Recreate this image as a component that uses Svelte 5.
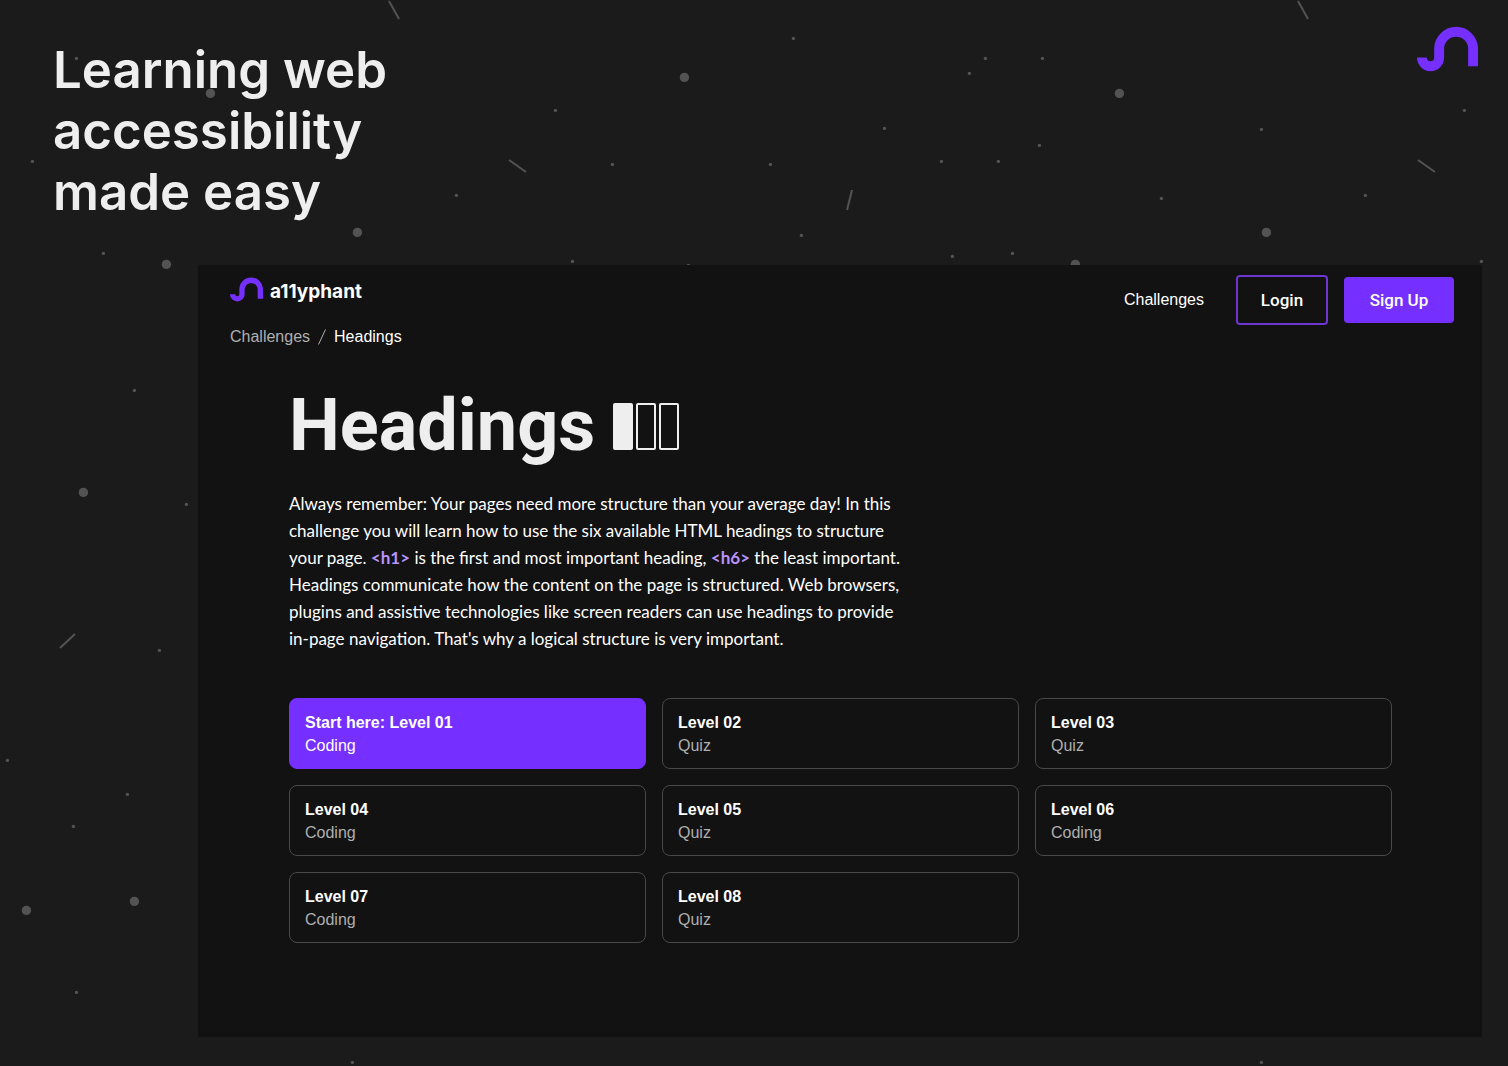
<script>
  const levels = [
    { title: 'Start here: Level 01', kind: 'Coding', active: true },
    { title: 'Level 02', kind: 'Quiz' },
    { title: 'Level 03', kind: 'Quiz' },
    { title: 'Level 04', kind: 'Coding' },
    { title: 'Level 05', kind: 'Quiz' },
    { title: 'Level 06', kind: 'Coding' },
    { title: 'Level 07', kind: 'Coding' },
    { title: 'Level 08', kind: 'Quiz' }
  ];

  // Night sky: planets, stars and falling streaks
  const planets = [
    [684, 77], [210, 93], [1119, 93], [357, 232], [1266, 232],
    [166, 264], [1075, 264], [83, 492], [26, 910], [134, 901]
  ];
  const stars = [
    [76, 58], [32, 161], [103, 253], [134, 390], [186, 504], [159, 650],
    [7, 760], [127, 794], [73, 826], [76, 992], [352, 1062], [1261, 1062],
    [456, 195], [555, 110], [612, 164], [572, 261], [688, 265], [793, 38],
    [770, 164], [801, 235], [884, 128], [941, 161], [969, 73], [985, 58],
    [1042, 58], [998, 161], [1039, 145], [952, 256], [1012, 253],
    [1161, 198], [1261, 129], [1365, 195], [1464, 110], [1481, 261]
  ];
  const streaks = [
    [389, 1, 399, 19], [1298, 1, 1308, 19], [509, 160, 526, 172],
    [1418, 160, 1435, 172], [852, 190, 847, 210], [60, 648, 75, 634]
  ];
</script>

{#snippet trunk(cls)}
  <svg class={cls} viewBox="0 0 61 46" fill="none" aria-hidden="true">
    <path d="M4.85 31.6A8.65 8.65 0 0 0 22.15 31.6V21.9A17 17 0 0 1 56.1 21.9V40.2" stroke="#7530ff" stroke-width="9.9" />
  </svg>
{/snippet}

<div class="page">
  <svg class="sky" aria-hidden="true">
    <g transform="translate(.4 .4)">
      {#each planets as [x, y]}<circle cx={x} cy={y} r="4.7" />{/each}
      {#each stars as [x, y]}<circle cx={x} cy={y} r="1.7" />{/each}
    </g>
    {#each streaks as [a, b, c, d]}<line x1={a} y1={b} x2={c} y2={d} />{/each}
  </svg>

  <header class="hero">
    <p class="slogan">Learning web<br />accessibility<br />made easy</p>
    {@render trunk('mark')}
  </header>

  <main class="panel">
    <div class="topbar">
      <div class="left">
        <a class="brand" href="#home">{@render trunk('brand-mark')}<span>a11yphant</span></a>
        <nav class="crumbs" aria-label="Breadcrumb">
          <a href="#challenges">Challenges</a>
          <svg class="slash" viewBox="0 0 8 16" aria-hidden="true"><path d="M7.5 .5L.5 15.5" /></svg>
          <span>Headings</span>
        </nav>
      </div>
      <nav class="actions" aria-label="Main">
        <a href="#challenges">Challenges</a>
        <button class="login" type="button">Login</button>
        <button class="signup" type="button">Sign Up</button>
      </nav>
    </div>

    <section class="content">
      <div class="title">
        <h1>Headings</h1>
        <div class="difficulty" role="img" aria-label="Difficulty: easy">
          <i class="on"></i><i></i><i></i>
        </div>
      </div>
      <p class="intro">
        Always remember: Your pages need more structure than your average day! In this<br />
        challenge you will learn how to use the six available HTML headings to structure<br />
        your page. <strong>&lt;h1&gt;</strong> is the first and most important heading, <strong>&lt;h6&gt;</strong> the least important.<br />
        Headings communicate how the content on the page is structured. Web browsers,<br />
        plugins and assistive technologies like screen readers can use headings to provide<br />
        in-page navigation. That's why a logical structure is very important.
      </p>
      <div class="levels">
        {#each levels as level}
          <a class="level" class:active={level.active} href="#level">
            <b>{level.title}</b>
            <span>{level.kind}</span>
          </a>
        {/each}
      </div>
    </section>
  </main>
</div>

<style>
  :global(body) {
    margin: 0;
    background: #1b1b1b;
  }
  .page {
    position: relative;
    min-height: 100vh;
    box-sizing: border-box;
    padding-bottom: 29px;
    overflow: hidden;
    color: #fff;
    font: 16px/24px 'Liberation Sans', sans-serif;
  }
  a {
    color: inherit;
    text-decoration: none;
  }
  .sky {
    position: absolute;
    inset: 0;
    width: 100%;
    height: 100%;
    fill: #535353;
    stroke: none;
  }
  .sky line {
    stroke: #535353;
    stroke-width: 2;
  }
  .hero {
    position: relative;
    display: flex;
    justify-content: space-between;
    align-items: flex-start;
    padding: 26px 30px 27px 53px;
  }
  .slogan {
    margin: 0;
    padding: 13px 0 16px;
    color: #eee;
    font: 600 51px/61px Inter, sans-serif;
  }
  .mark {
    width: 61px;
    height: 46px;
  }
  .panel {
    position: relative;
    margin: 0 26px 0 198px;
    padding-bottom: 94px;
    background: #121212;
  }
  .topbar {
    display: flex;
    justify-content: space-between;
    align-items: flex-start;
    padding: 10px 28px 0 32px;
  }
  .brand {
    display: flex;
    align-items: flex-start;
    gap: 7px;
    padding-top: 2px;
    font: 700 19px/30px Inter, sans-serif;
  }
  .brand-mark {
    width: 33px;
    height: 25px;
  }
  .crumbs {
    display: flex;
    align-items: center;
    gap: 8px;
    margin-top: 18px;
  }
  .crumbs a {
    color: #afafaf;
  }
  .slash {
    width: 8px;
    height: 16px;
    fill: none;
    stroke: #afafaf;
  }
  .actions {
    display: flex;
    align-items: center;
    gap: 16px;
  }
  .actions a {
    margin-right: 16px;
  }
  button {
    padding: 0;
    border: 2px solid #7530ff;
    border-radius: 4px;
    color: #fff;
    font: 500 17px/24px Roboto, sans-serif;
  }
  .login {
    width: 92px;
    height: 50px;
    border-color: #6e35cf;
    background: none;
  }
  .signup {
    width: 110px;
    height: 46px;
    background: #7530ff;
  }
  .content {
    padding: 29px 90px 0 91px;
  }
  .title {
    display: flex;
    align-items: center;
    gap: 18px;
    color: #eee;
  }
  h1 {
    margin: 0;
    font: 700 72px/96px Roboto, sans-serif;
  }
  .difficulty {
    display: flex;
    gap: 3px;
  }
  .difficulty i {
    box-sizing: border-box;
    width: 20px;
    height: 47px;
    border: 2px solid #eee;
    border-radius: 2px;
  }
  .difficulty .on {
    background: #eee;
  }
  .intro {
    margin: 16px 0 46px;
    white-space: nowrap;
    font: 17px/27px Lato, sans-serif;
  }
  .intro strong {
    color: #b993ff;
  }
  .levels {
    display: grid;
    grid-template-columns: repeat(3, 1fr);
    gap: 16px;
  }
  .level {
    display: flex;
    flex-direction: column;
    padding: 12px 15px 11px;
    border: 1px solid #484848;
    border-radius: 8px;
    line-height: 23px;
  }
  .level span {
    color: #afafaf;
  }
  .active {
    border-color: #7530ff;
    background: #7530ff;
  }
  .level.active span {
    color: #fff;
  }
</style>
